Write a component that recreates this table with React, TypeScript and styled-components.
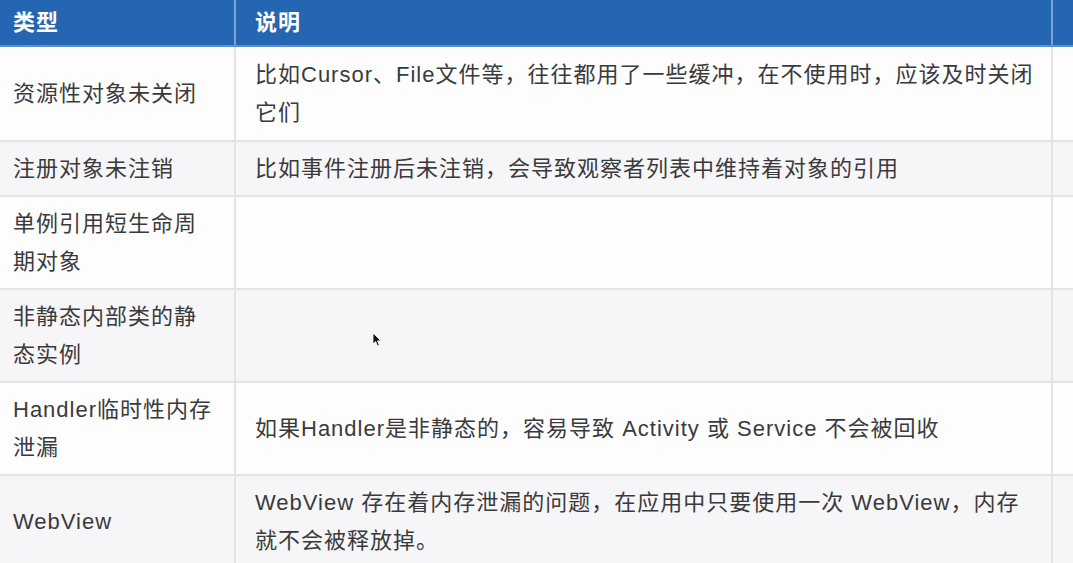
import { createGlobalStyle } from "styled-components";
import styled from "styled-components";

const GlobalStyle = createGlobalStyle`
  html, body {
    margin: 0;
    padding: 0;
    background: #fdfdfd;
    overflow: hidden;
  }
  body {
    font-family: "Liberation Sans", "Noto Sans CJK SC", sans-serif;
  }
`;

const Page = styled.div`
  position: relative;
  width: 1073px;
  height: 563px;
  overflow: hidden;
`;

const Table = styled.table`
  width: 1073px;
  table-layout: fixed;
  border-collapse: collapse;
  font-size: 22px;
  letter-spacing: 1px;
  color: #3a3a3c;
`;

const HeadCell = styled.th<{ $first?: boolean }>`
  height: 45px;
  padding: 0 0 0 ${(p) => (p.$first ? "13px" : "19px")};
  background: #2566b3;
  color: #ffffff;
  font-weight: 600;
  text-align: left;
  line-height: 38px;
  vertical-align: middle;
  border-right: 2px solid #7aa4d8;
  border-bottom: 2px solid #5c8fcf;
  &:last-child {
    border-right: none;
  }
`;

const Row = styled.tr<{ $shade?: boolean }>`
  background: ${(p) => (p.$shade ? "#f6f6f8" : "#fdfdfd")};
  &:first-child td {
    padding-top: 9px;
    padding-bottom: 8px;
  }
`;

const Cell = styled.td<{ $first?: boolean }>`
  padding: 8px ${(p) => (p.$first ? "20px" : "12px")} 7px
    ${(p) => (p.$first ? "13px" : "19px")};
  line-height: 38px;
  vertical-align: middle;
  border-right: 2px solid #e4e4e7;
  border-bottom: 2px solid #e4e4e7;
  word-break: break-all;
  &:last-child {
    border-right: none;
  }
`;

const Pointer = styled.svg`
  position: absolute;
  left: 372px;
  top: 332px;
`;

const rows = [
  {
    type: "资源性对象未关闭",
    desc: "比如Cursor、File文件等，往往都用了一些缓冲，在不使用时，应该及时关闭它们",
  },
  {
    type: "注册对象未注销",
    desc: "比如事件注册后未注销，会导致观察者列表中维持着对象的引用",
  },
  { type: "单例引用短生命周期对象", desc: "" },
  { type: "非静态内部类的静态实例", desc: "" },
  {
    type: "Handler临时性内存泄漏",
    desc: "如果Handler是非静态的，容易导致 Activity 或 Service 不会被回收",
  },
  {
    type: "WebView",
    desc: "WebView 存在着内存泄漏的问题，在应用中只要使用一次 WebView，内存就不会被释放掉。",
  },
];

export default function App() {
  return (
    <Page>
      <GlobalStyle />
      <Table>
        <colgroup>
          <col style={{ width: 235 }} />
          <col style={{ width: 817 }} />
          <col />
        </colgroup>
        <thead>
          <tr>
            <HeadCell $first>类型</HeadCell>
            <HeadCell>说明</HeadCell>
            <HeadCell />
          </tr>
        </thead>
        <tbody>
          {rows.map((r, i) => (
            <Row key={i} $shade={i % 2 === 1}>
              <Cell $first>{r.type}</Cell>
              <Cell>{r.desc}</Cell>
              <Cell />
            </Row>
          ))}
        </tbody>
      </Table>
      <Pointer width="11" height="15" viewBox="0 0 11 15">
        <path
          d="M1 1 L1 12 L3.6 9.6 L5.6 14 L7.4 13.2 L5.4 8.9 L9 8.9 Z"
          fill="#111"
          stroke="#fff"
          strokeWidth="0.8"
        />
      </Pointer>
    </Page>
  );
}
